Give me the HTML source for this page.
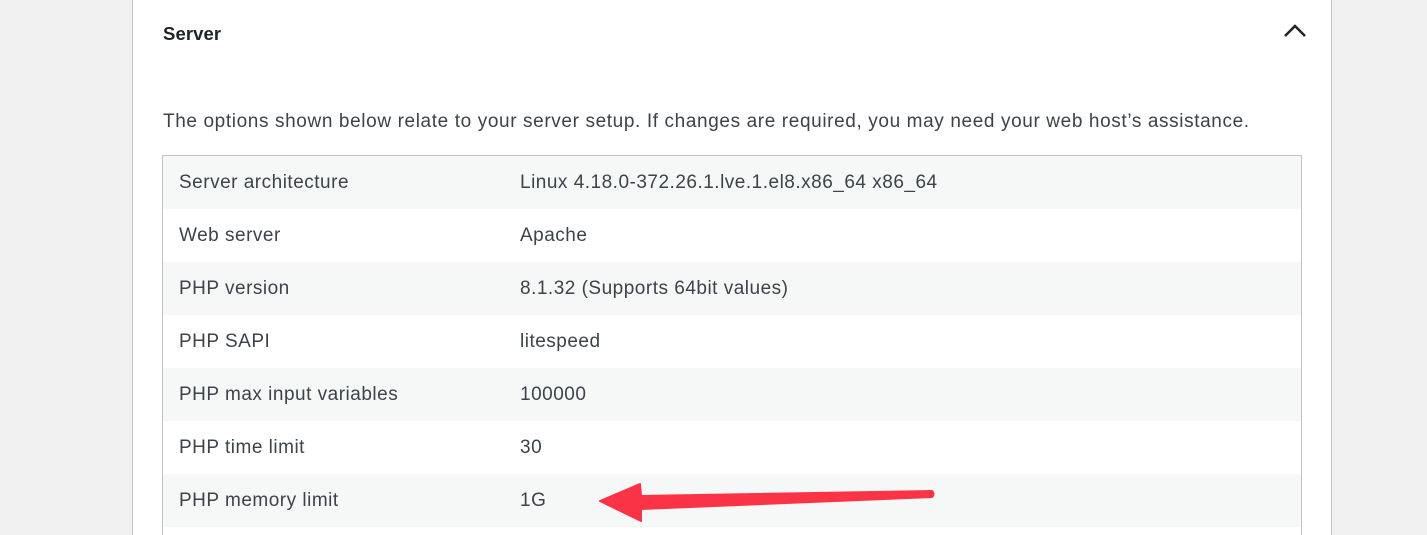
<!DOCTYPE html>
<html><head><style>
html,body{margin:0;width:1427px;height:535px;overflow:hidden}
body{background:#f0f0f1;font-family:"Liberation Sans",Arial,sans-serif;position:relative;color:#3c434a}
.panel{position:absolute;left:132px;top:-1px;width:1198px;height:540px;background:#fff;border:1px solid #c3c4c7;border-bottom:none;overflow:hidden}
h2{position:absolute;left:30px;top:23px;margin:0;font-size:18.5px;font-weight:bold;color:#1d2327;letter-spacing:0.1px}
.chev{position:absolute;left:1150px;top:22px}
p{position:absolute;left:30px;top:111px;margin:0;font-size:19px;letter-spacing:0.62px;color:#3c434a;white-space:nowrap}
table{position:absolute;left:29px;top:155px;width:1140px;border:1px solid #c3c4c7;border-bottom:none;border-collapse:collapse;font-size:19px;letter-spacing:0.5px}
td{height:53px;padding:0 16px;color:#3c434a}
td:first-child{width:309px}
tr:nth-child(odd){background:#f6f7f7}
tr.last td{height:8px;padding:0}
tr.last{background:#fff}
</style></head><body>
<div class="panel">
<h2>Server</h2>
<svg class="chev" width="24" height="18" viewBox="0 0 24 18"><path d="M2 14 L12 4 L22 14" fill="none" stroke="#1d2327" stroke-width="2.5"/></svg>
<p>The options shown below relate to your server setup. If changes are required, you may need your web host’s assistance.</p>
<table>
<tr><td>Server architecture</td><td>Linux 4.18.0-372.26.1.lve.1.el8.x86_64 x86_64</td></tr>
<tr><td>Web server</td><td>Apache</td></tr>
<tr><td>PHP version</td><td>8.1.32 (Supports 64bit values)</td></tr>
<tr><td>PHP SAPI</td><td>litespeed</td></tr>
<tr><td>PHP max input variables</td><td>100000</td></tr>
<tr><td>PHP time limit</td><td>30</td></tr>
<tr><td>PHP memory limit</td><td>1G</td></tr>
<tr class="last"><td></td><td></td></tr>
</table>
</div>
<svg style="position:absolute;left:0;top:0" width="1427" height="535"><path d="M600 501 L640 484 L641 496 L932 491 Q935 494 932 497 L641 509 L641 521 Z" fill="#fb3347" stroke="#fb3347" stroke-width="2" stroke-linejoin="round"/></svg>
</body></html>
